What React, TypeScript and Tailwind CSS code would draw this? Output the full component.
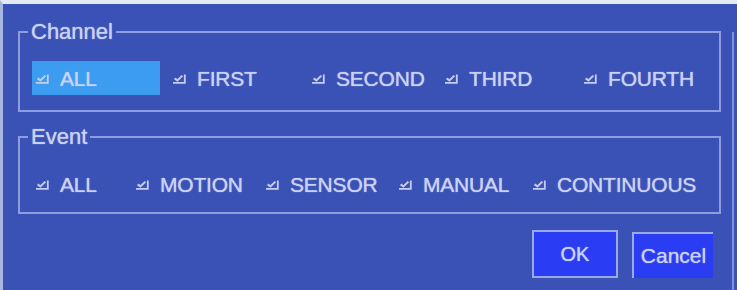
import React from 'react';

const font = { fontFamily: '"Liberation Sans", Arial, sans-serif' };

function Check() {
  return (
    <svg width="14" height="12" viewBox="0 0 14 12" className="shrink-0">
      <path d="M1 10.8H12.8V2.6" fill="none" stroke="#c6cdf1" strokeWidth="1.8" />
      <path d="M2.6 6.4L5.4 8.4L10.4 3.6" fill="none" stroke="#c6cdf1" strokeWidth="2" />
    </svg>
  );
}

function Item({ label, width, active }: { label: string; width?: string; active?: boolean }) {
  return (
    <div
      className={`flex items-center gap-[11px] h-[34px] ${width ?? ''} ${
        active ? 'bg-[#3b9cf0] pl-[3px]' : ''
      }`}
    >
      <Check />
      <span className="text-[21px] leading-none text-[#cad2f4] tracking-[-0.2px] [text-shadow:0_0_1px_#cad2f4]">
        {label}
      </span>
    </div>
  );
}

function Group({ title, children }: { title: string; children: React.ReactNode }) {
  return (
    <fieldset className="border-2 border-[#8d9ddf] ml-[15px] mr-[11px] px-[12px]">
      <legend className="-ml-[4px] px-[3px] text-[22px] leading-[24px] text-[#cad2f4] [text-shadow:0_0_1px_#cad2f4]">
        {title}
      </legend>
      {children}
    </fieldset>
  );
}

export default function App() {
  const channels = [
    { label: 'FIRST', width: 'w-[139px]' },
    { label: 'SECOND', width: 'w-[133px]' },
    { label: 'THIRD', width: 'w-[139px]' },
    { label: 'FOURTH', width: '' },
  ];
  const events = [
    { label: 'ALL', width: 'w-[100px]' },
    { label: 'MOTION', width: 'w-[130px]' },
    { label: 'SENSOR', width: 'w-[133px]' },
    { label: 'MANUAL', width: 'w-[134px]' },
    { label: 'CONTINUOUS', width: '' },
  ];

  return (
    <div style={font} className="w-[737px] h-[290px] flex bg-[#3a52b6] border-t-4 border-t-[#e4e8f1] border-l-[3px] border-l-[#a9b6e4] overflow-hidden">
      <div className="flex-1 flex flex-col pt-[16px]">
        <Group title="Channel">
          <div className="flex items-center pt-[17px] pb-[15px]">
            <div className="w-[140px]">
              <Item label="ALL" width="w-[128px]" active />
            </div>
            {channels.map((c) => (
              <Item key={c.label} label={c.label} width={c.width} />
            ))}
          </div>
        </Group>

        <div className="mt-[13px]">
          <Group title="Event">
            <div className="flex items-center pl-[3px] pt-[18px] pb-[11px]">
              {events.map((e) => (
                <Item key={e.label} label={e.label} width={e.width} />
              ))}
            </div>
          </Group>
        </div>

        <div className="flex justify-end gap-[14px] mt-[16px] pr-[19px]">
          <button className="w-[86px] h-[48px] bg-[#2a3df2] border-2 border-[#9aa8e6] text-[20px] text-[#cad2f4] [text-shadow:0_0_1px_#cad2f4]">
            OK
          </button>
          <button className="w-[81px] h-[46px] mt-[2px] bg-[#2a3df2] border-l-2 border-t-2 border-[#9aa8e6] text-[21px] text-[#cad2f4] [text-shadow:0_0_1px_#cad2f4]">
            Cancel
          </button>
        </div>
      </div>
      <div className="w-[5px] bg-[#3a52b6] border-l-2 border-l-[#7f92dc] mt-[28px]" />
    </div>
  );
}
